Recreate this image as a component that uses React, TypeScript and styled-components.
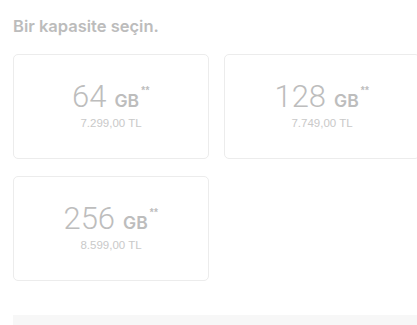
import React from "react";
import styled, { createGlobalStyle } from "styled-components";

const Global = createGlobalStyle`
  html, body { margin: 0; padding: 0; background: #fff; overflow: hidden; }
  body { font-family: "Liberation Sans", Arial, sans-serif; }
`;

const Page = styled.div`
  width: 430px;
  padding: 16px 0 0 13px;
  box-sizing: border-box;
`;

const Heading = styled.h2`
  margin: 0 0 18px;
  font-family: Inter, "Liberation Sans", sans-serif;
  font-size: 16.5px;
  line-height: 20px;
  font-weight: 600;
  color: #bcbcbc;
`;

const Grid = styled.div`
  display: grid;
  grid-template-columns: 196px 196px;
  column-gap: 15px;
  row-gap: 17px;
`;

const Card = styled.div`
  height: 105px;
  box-sizing: border-box;
  border: 1px solid #ececec;
  border-radius: 5px;
  display: flex;
  flex-direction: column;
  align-items: center;
  justify-content: center;
  padding-bottom: 2px;
`;

const Capacity = styled.div`
  display: flex;
  align-items: baseline;
  color: #bdbdbd;
  line-height: 1;
`;

const Num = styled.span`
  font-family: Roboto, "Liberation Sans", sans-serif;
  font-weight: 300;
  font-size: 31px;
`;

const Unit = styled.span`
  font-family: Inter, "Liberation Sans", sans-serif;
  font-weight: 600;
  font-size: 17.5px;
  margin-left: 8px;
`;

const Stars = styled.sup`
  font-family: "Liberation Sans", sans-serif;
  font-size: 10px;
  font-weight: 700;
  align-self: flex-start;
  margin-left: 2px;
  margin-top: 5px;
  line-height: 1;
  letter-spacing: 0.5px;
`;

const Price = styled.div`
  margin-top: 5px;
  font-size: 11.5px;
  color: #c9c9c9;
  line-height: 13px;
`;

const Footer = styled.div`
  margin-top: 34px;
  height: 20px;
  background: #f7f7f7;
`;

const options = [
  { gb: "64", price: "7.299,00 TL" },
  { gb: "128", price: "7.749,00 TL" },
  { gb: "256", price: "8.599,00 TL" },
];

export default function App() {
  return (
    <Page>
      <Global />
      <Heading>Bir kapasite seçin.</Heading>
      <Grid>
        {options.map((o) => (
          <Card key={o.gb}>
            <Capacity>
              <Num>{o.gb}</Num>
              <Unit>GB</Unit>
              <Stars>**</Stars>
            </Capacity>
            <Price>{o.price}</Price>
          </Card>
        ))}
      </Grid>
      <Footer />
    </Page>
  );
}
